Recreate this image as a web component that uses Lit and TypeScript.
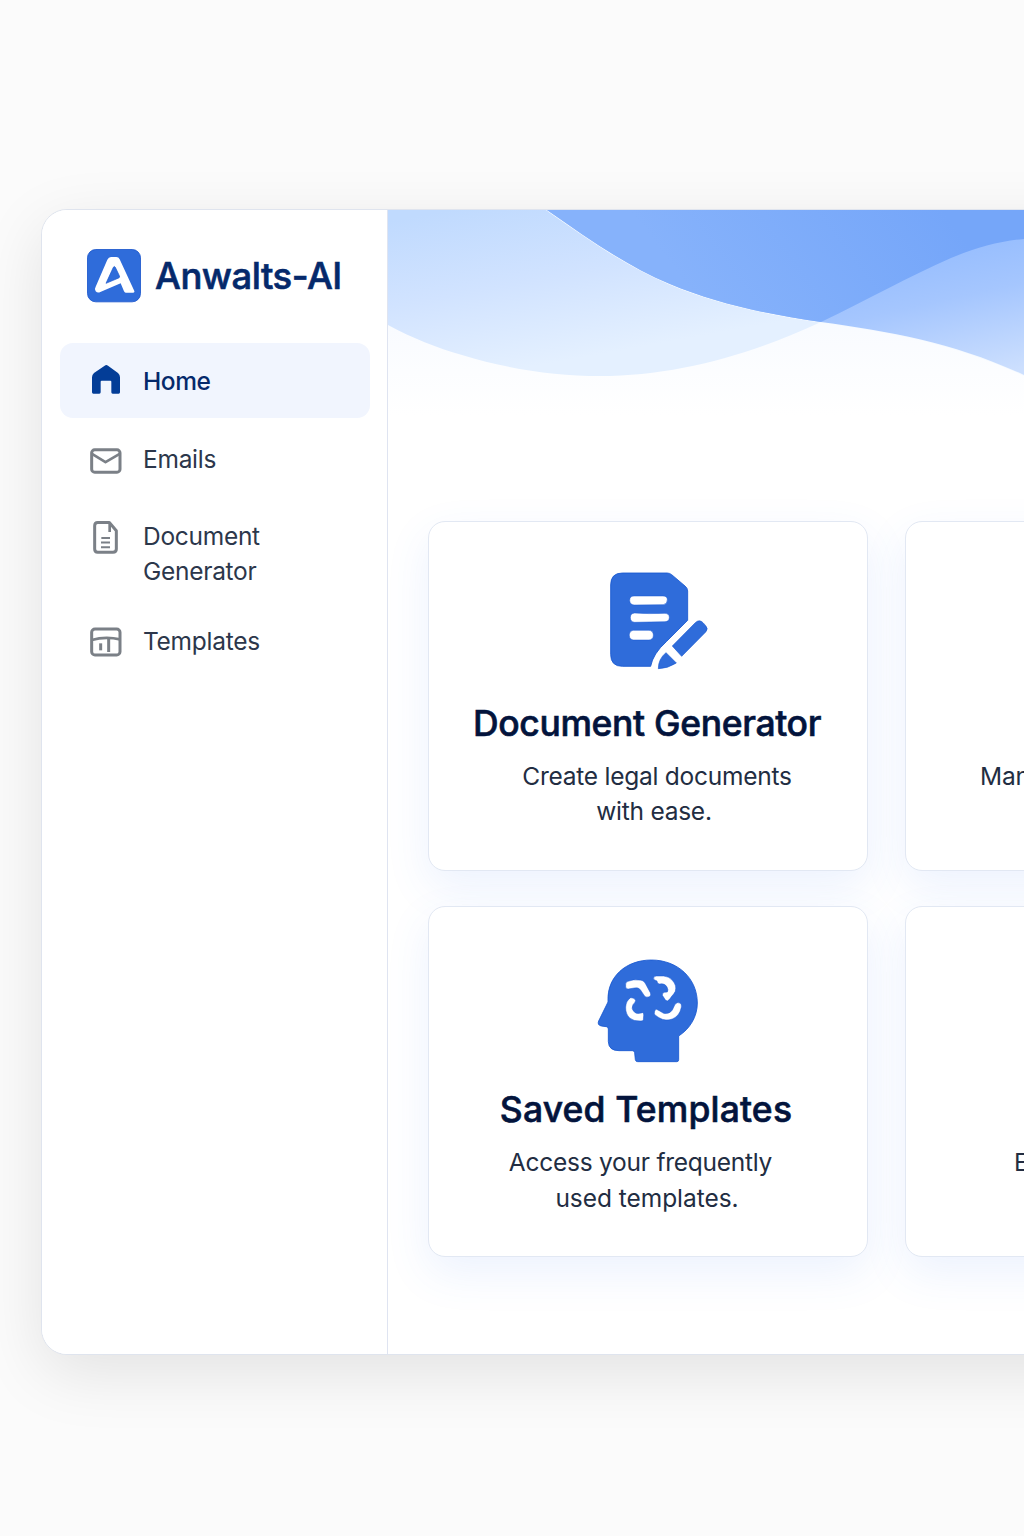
import { LitElement, html, css, svg } from "lit";
import { customElement, property } from "lit/decorators.js";

const homeIcon = svg`<svg class="icon" viewBox="174 489 108 108">
  <path d="M186 577V532q0-8 6-13L224 497q5-4 10 0L264 519q6 5 6 13V577q0 4-4 4H248q-4 0-4-4V545q0-3-3-3H215q-3 0-3 3V577q0 4-4 4H190q-4 0-4-4Z" fill="#033d97"/></svg>`;

const mailIcon = svg`<svg class="icon" viewBox="24 19.5 108 108" fill="none" stroke="#7b8087" stroke-width="9" stroke-linejoin="round">
  <rect x="35" y="43" width="85" height="67" rx="9"/>
  <path d="M36 55L76.500 80L119 55" stroke-width="8"/></svg>`;

const docIcon = svg`<svg class="icon" viewBox="24 252 108 108" fill="none" stroke="#7b8087" stroke-width="9" stroke-linejoin="round">
  <path d="M53 262.500H88L109 287V342q0 10-10 10H53q-9 0-9-10V272.500q0-10 9-10Z"/>
  <path d="M89 263V291" stroke-width="8"/>
  <path d="M64 309H90M63 322.500H90M63 336.500H90" stroke-width="6"/></svg>`;

const templateIcon = svg`<svg class="icon" viewBox="24 566 108 108" fill="none" stroke="#7b8087" stroke-width="9" stroke-linejoin="round">
  <rect x="35" y="581" width="85" height="78" rx="10"/>
  <path d="M35 614Q76 602 120 612" stroke-width="8"/>
  <path d="M86 610V650" stroke-width="9"/><path d="M62 624V645" stroke-width="9"/></svg>`;

const documentArt = svg`<svg class="art" viewBox="-21 0 420 390">
  <path d="M112 54H246Q254 54 260 59L300 93Q308 99 308 108V196L244 260Q204 296 197 334H112Q77 334 77 298V90Q77 54 112 54Z" fill="#2f6cda" stroke="#1657d0" stroke-width="2.500"/>
  <g fill="#fff" stroke="#1657d0" stroke-width="1.500">
    <path d="M147 123H234Q247 123 247 134Q247 147 235 149L147 150Q134 149 134 136T147 123Z"/>
    <path d="M149 174Q190 177 240 175Q253 176 253 187Q253 200 240 200L149 202Q136 200 136 188Q136 175 149 174Z"/>
    <rect x="133" y="226" width="72" height="29" rx="13"/>
  </g>
  <g fill="#2f6cda" stroke="#1657d0" stroke-width="2">
    <path d="M262 273L331 203Q343 192 354 203L362 212Q371 221 362 231L290 304Z"/>
    <path d="M243 293L274 324Q247 341 220 341Q220 312 243 293Z"/>
  </g></svg>`;

const headArt = svg`<svg class="art" viewBox="-21 -15 420 390">
  <path d="M69 168C66 94 124 45 199 45C279 45 337 101 337 174C337 215 315 251 281 273V344Q281 350 275 350H158Q152 350 151 344L149 323Q148 317 142 317H102Q71 317 70 290V252Q70 246 64 245L49 243Q36 240 41 228L69 171Z" fill="#2f6cda" stroke="#1657d0" stroke-width="2.500"/>
  <g fill="#fff" stroke="#1657d0" stroke-width="1.500" stroke-linejoin="round">
    <path d="M122 119Q121 111 129 109Q146 102 160 105Q176 104 182 117L196 143Q200 153 190 156Q182 158 178 152L166 134Q160 126 148 129L130 132Q122 132 122 125Z"/>
    <path d="M213 93H236Q252 94 262 106Q276 121 271 139Q267 147 260 154Q254 165 247 168Q240 167 238 160L232 151Q231 144 238 142L247 141Q251 135 246 126Q239 114 224 117Q216 116 216 108L207 104Q202 96 213 93Z"/>
    <path d="M137 158Q149 157 152 167Q150 173 144 179Q138 191 146 199Q153 208 164 205L173 203Q177 204 176 212L175 224Q174 228 168 228Q145 229 134 219Q121 206 122 186Q123 167 137 158Z"/>
    <path d="M213 192Q225 198 236 205Q253 208 262 195L270 178Q277 170 285 174Q291 178 289 187Q284 213 262 222Q241 230 222 218Q211 212 208 207Q207 198 213 192Z"/>
  </g></svg>`;

@customElement("app-sidebar")
class AppSidebar extends LitElement {
  static styles = css`
    :host { display: block; box-sizing: border-box; width: 346px; flex: none; background: #fff; border-right: 1px solid #dfe4f1; padding: 39px 17px 0 18px; }
    .brand { display: flex; align-items: center; gap: 14px; padding-left: 27px; height: 54px; }
    .logo { width: 54px; height: 54px; flex: none; display: block; }
    .name { font-size: 36.500px; font-weight: 500; -webkit-text-stroke: 0.6px #05296b; letter-spacing: -0.5px; color: #05296b; white-space: nowrap; }
    .nav { display: flex; flex-direction: column; margin-top: 40px; }
    .item { display: flex; gap: 19px; padding: 20px 20px 20px 28px; font-size: 24.500px; line-height: 35px; color: #2c374b; letter-spacing: -0.28px; }
    .active { height: 35px; background: #f1f5fe; border-radius: 13px; color: #05296b; font-weight: 500; margin-bottom: 4px; letter-spacing: -0.4px; }
    .active span { padding-top: 1px; }
    .long { padding-top: 21px; padding-bottom: 15px; }
    .icon { width: 36px; height: 36px; flex: none; display: block; }
  `;
  render() {
    return html`
      <div class="brand">
        <svg class="logo" viewBox="171 146 162 162">
          <rect x="172.500" y="147.500" width="159" height="157" rx="25" fill="#2f6cda" stroke="#1a56cc" stroke-width="2.500"/>
          <path fill="#fff" fill-rule="evenodd" d="M243 170H259Q266 170 269 177L313 272Q315 276 310 277H287Q284 277 282 273L272 249L211 275Q203 279 197 273Q192 267 197 259L232 178Q236 170 243 170ZM250 201L228 249L266 233Q271 231 268 226L256 201Q253 196 250 201Z"/>
          <path fill="none" stroke="#1a56cc" stroke-width="2" d="M250 201L228 249L266 233Q271 231 268 226L256 201Q253 196 250 201Z"/>
        </svg>
        <span class="name">Anwalts-AI</span>
      </div>
      <nav class="nav">
        <div class="item active">${homeIcon}<span>Home</span></div>
        <div class="item">${mailIcon}<span>Emails</span></div>
        <div class="item long">${docIcon}<span>Document<br>Generator</span></div>
        <div class="item">${templateIcon}<span>Templates</span></div>
      </nav>`;
  }
}

@customElement("app-waves")
class AppWaves extends LitElement {
  static styles = css`
    :host { display: block; height: 311px; }
    .waves { display: block; width: 636px; height: 311px; }
  `;
  render() {
    const a = "M388 325C412 338 437 348 462 355C507 369 555 376 600 376C677 376 752 354 821 322C867 300 910 276 951 258C975 248 1000 241 1024 239V210H388Z";
    const b = "M547 210C590 240 627 266 670 284C715 303 765 314 821 322C893 332 955 343 1024 375V210Z";
    return html`<svg class="waves" viewBox="388 210 636 311">
      <defs>
        <linearGradient id="haze" x1="0" y1="0" x2="0" y2="1"><stop offset=".3" stop-color="#f7faff"/><stop offset=".66" stop-color="#fff"/></linearGradient>
        <linearGradient id="light" gradientUnits="userSpaceOnUse" x1="450" y1="210" x2="480" y2="376"><stop offset="0" stop-color="#c0dafe"/><stop offset=".5" stop-color="#d1e3ff"/><stop offset="1" stop-color="#e4f0ff"/></linearGradient>
        <linearGradient id="pale" gradientUnits="userSpaceOnUse" x1="960" y1="240" x2="990" y2="375"><stop offset="0" stop-color="#96bdfe"/><stop offset=".4" stop-color="#a5c6fe"/><stop offset="1" stop-color="#ccdffe"/></linearGradient>
        <linearGradient id="deep" gradientUnits="userSpaceOnUse" x1="720" y1="330" x2="920" y2="180"><stop offset="0" stop-color="#86b2fb"/><stop offset="1" stop-color="#75a6f9"/></linearGradient>
        <clipPath id="under"><path d="${a}"/></clipPath>
      </defs>
      <rect x="388" y="210" width="636" height="311" fill="url(#haze)"/>
      <path d="${a}" fill="url(#light)"/>
      <path d="${b}" fill="url(#pale)" stroke="#f4f9ff" stroke-width="1.500"/>
      <path d="${b}" fill="url(#pale)"/>
      <g clip-path="url(#under)"><path d="${b}" fill="url(#deep)"/></g>
    </svg>`;
  }
}

@customElement("feature-card")
class FeatureCard extends LitElement {
  @property() heading = "";
  @property({ attribute: false }) art: unknown = null;
  @property({ attribute: false }) lines: string[] = [];
  static styles = css`
    :host { display: block; box-sizing: border-box; background: #fff; border: 1px solid #e2e8f3; border-radius: 17px; box-shadow: 0 16px 44px rgba(70, 130, 245, 0.1); text-align: center; padding-top: 33px; white-space: nowrap; }
    .art { display: block; width: 140px; height: 130px; margin: 0 auto; }
    .heading { margin: 16px 0 0; height: 46px; line-height: 46px; font-size: 35.500px; font-weight: 500; -webkit-text-stroke: 0.6px #03143c; color: #03143c; }
    .body { font-size: 24.500px; line-height: 35px; color: #222d42; margin-top: 12px; letter-spacing: -0.25px; }
    .line { display: block; }
    :host(.docs) .heading { letter-spacing: -0.35px; padding-right: 2px; }
    :host(.docs) .body { margin-top: 11.500px; }
    :host(.docs) .line:first-child { padding-left: 18px; }
    :host(.docs) .line:last-child { padding-left: 12px; }
    :host(.saved) .heading { padding-right: 4px; letter-spacing: 0.15px; margin-top: 17px; }
    :host(.saved) .body { line-height: 35.500px; }
    :host(.saved) .line:first-child { padding-right: 15px; }
    :host(.saved) .line:last-child { letter-spacing: -0.05px; padding-right: 2px; }
    :host(.edge) { text-align: left; }
    :host(.edge) .body { padding: 204px 0 0 74px; margin-top: 0; }
    :host(.edge.low) .body { padding: 205px 0 0 108px; }
  `;
  render() {
    return html`${this.art}
      ${this.heading ? html`<h2 class="heading">${this.heading}</h2>` : null}
      <div class="body">${this.lines.map((l) => html`<span class="line">${l}</span>`)}</div>`;
  }
}

@customElement("app-root")
class AppRoot extends LitElement {
  static styles = css`
    :host { display: block; box-sizing: border-box; width: 1024px; height: 1536px; overflow: hidden; background: #fbfbfb; padding: 209px 0 0 41px; font-family: Inter, "Liberation Sans", sans-serif; }
    .window { display: flex; box-sizing: border-box; width: 1345px; height: 1146px; border: 1px solid #dfe4ee; border-radius: 26px; overflow: hidden; background: #fff; box-shadow: 0 18px 64px rgba(0, 0, 0, 0.1); }
    .main { flex: 1; min-width: 0; }
    .grid { display: grid; grid-template-columns: 440px 440px; grid-template-rows: 350px 351px; gap: 35px 37px; padding-left: 40px; }
  `;
  render() {
    return html`<div class="window">
      <app-sidebar></app-sidebar>
      <main class="main">
        <app-waves></app-waves>
        <div class="grid">
          <feature-card class="docs" heading="Document Generator" .art=${documentArt} .lines=${["Create legal documents", "with ease."]}></feature-card>
          <feature-card class="edge" .lines=${["Man"]}></feature-card>
          <feature-card class="saved" heading="Saved Templates" .art=${headArt} .lines=${["Access your frequently", "used templates."]}></feature-card>
          <feature-card class="edge low" .lines=${["E"]}></feature-card>
        </div>
      </main>
    </div>`;
  }
}
